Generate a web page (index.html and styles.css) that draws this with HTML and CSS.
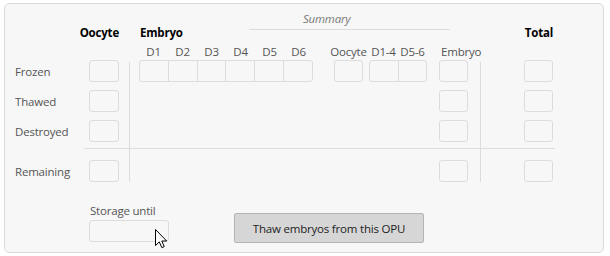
FILE: index.html
```html
<!DOCTYPE html>
<html lang="en">
<head>
    <meta charset="UTF-8">
    <title>OPU Storage</title>
    <link rel="stylesheet" href="styles.css">
</head>
<body>

<div class="panel">
    <div class="grid">
        <!-- header row -->
        <div class="head h-oocyte">Oocyte</div>
        <div class="head h-embryo">Embryo</div>
        <div class="summary">Summary</div>
        <div class="head h-total">Total</div>

        <!-- sub header row -->
        <div class="sub-days">
            <span>D1</span><span>D2</span><span>D3</span><span>D4</span><span>D5</span><span>D6</span>
        </div>
        <div class="sub s-oocyte">Oocyte</div>
        <div class="sub-days s-days"><span>D1-4</span><span>D5-6</span></div>
        <div class="sub s-embryo">Embryo</div>

        <!-- row labels -->
        <div class="label row-frozen">Frozen</div>
        <div class="label row-thawed">Thawed</div>
        <div class="label row-destroyed">Destroyed</div>
        <div class="label row-remaining">Remaining</div>

        <!-- oocyte column -->
        <div class="cell col-oocyte row-frozen"></div>
        <div class="cell col-oocyte row-thawed"></div>
        <div class="cell col-oocyte row-destroyed"></div>
        <div class="cell col-oocyte row-remaining"></div>

        <div class="vline vline-left"></div>

        <!-- embryo days -->
        <div class="cell-group col-days row-frozen">
            <div></div><div></div><div></div><div></div><div></div><div></div>
        </div>

        <!-- summary -->
        <div class="cell col-s-oocyte row-frozen"></div>
        <div class="cell-group col-s-days row-frozen"><div></div><div></div></div>
        <div class="cell col-s-embryo row-frozen"></div>
        <div class="cell col-s-embryo row-thawed"></div>
        <div class="cell col-s-embryo row-destroyed"></div>
        <div class="cell col-s-embryo row-remaining"></div>

        <div class="vline vline-right"></div>

        <!-- totals -->
        <div class="cell col-total row-frozen"></div>
        <div class="cell col-total row-thawed"></div>
        <div class="cell col-total row-destroyed"></div>
        <div class="cell col-total row-remaining"></div>

        <div class="hline"></div>
    </div>

    <div class="storage-row">
        <div class="storage">
            <label for="storageUntil">Storage until</label>
            <input type="text" id="storageUntil">
        </div>
        <button type="button">Thaw embryos from this OPU</button>
    </div>

    <!-- mouse pointer over the date field -->
    <svg class="cursor" width="13" height="20" viewBox="0 0 13 20">
        <path d="M0.5 0.5 L0.5 16.5 L4.3 12.9 L6.8 18.6 L9.2 17.6 L6.8 12 L11.7 12 Z" fill="#fff" stroke="#000" stroke-width="1" stroke-linejoin="miter"/>
    </svg>
</div>

</body>
</html>
```

FILE: styles.css
```css
body {
    margin: 0;
    background-color: #fff;
    font-family: "Open Sans", "Liberation Sans", sans-serif;
    font-size: 11.5px;
    letter-spacing: -0.2px;
    color: #555;
}
.panel {
    position: relative;
    box-sizing: border-box;
    width: 600px;
    height: 250px;
    margin: 3px 0 0 4px;
    padding: 6px 0 0 10px;
    background-color: #f7f7f7;
    border: 1px solid #dcdcdc;
    border-radius: 5px;
}
.grid {
    display: grid;
    grid-template-columns: 69px 5px 30px 10px 1px 9px 174px 21px 29px 6px 58px 12px 29px 12px 1px 43px 29px 2px;
    grid-template-rows: 30px 20px 22px 8px 22px 8px 22px 6px 1px 11px 22px;
}
.head {
    grid-row: 1;
    align-self: end;
    display: flex;
    margin-bottom: -1px;
    line-height: 16px;
    font-weight: bold;
    color: #000;
    white-space: nowrap;
}
.h-oocyte {
    grid-column: 3;
    justify-content: flex-end;
}
.h-embryo {
    grid-column: 7;
    padding-left: 1px;
}
.h-total {
    grid-column: 17;
    justify-content: flex-end;
}
.summary {
    grid-row: 1;
    grid-column: 7 / 14;
    align-self: start;
    margin: 0 18px 0 110px;
    padding: 1px 0 2px 54px;
    line-height: 16px;
    font-style: italic;
    color: #777;
    border-bottom: 1px solid #dcdcdc;
}
.sub, .sub-days {
    grid-row: 2;
    align-self: end;
    display: flex;
    line-height: 16px;
    white-space: nowrap;
}
.sub-days {
    grid-column: 7;
}
.sub-days span {
    width: 29px;
    display: flex;
    justify-content: center;
}
.s-oocyte {
    grid-column: 9;
    justify-content: center;
}
.s-days {
    grid-column: 11;
}
.s-embryo {
    grid-column: 13;
    padding-left: 2px;
}
.label {
    grid-column: 1;
    padding-top: 1px;
    line-height: 22px;
    white-space: nowrap;
}
.row-frozen { grid-row: 3; }
.row-thawed { grid-row: 5; }
.row-destroyed { grid-row: 7; }
.row-remaining { grid-row: 11; }

.cell, .cell-group {
    box-sizing: border-box;
    border: 1px solid #dcdcdc;
    border-radius: 3px;
}
.cell-group {
    display: flex;
}
.cell-group div {
    flex: 1;
}
.cell-group div + div {
    border-left: 1px solid #dcdcdc;
}
.col-oocyte { grid-column: 3; }
.col-days { grid-column: 7; }
.col-s-oocyte { grid-column: 9; }
.col-s-days { grid-column: 11; }
.col-s-embryo { grid-column: 13; }
.col-total { grid-column: 17; }

.vline {
    grid-row: 3 / 12;
    margin-top: 2px;
    background-color: #dcdcdc;
}
.vline-left { grid-column: 5; }
.vline-right { grid-column: 15; }
.hline {
    grid-row: 9;
    grid-column: 2 / 19;
    background-color: #dcdcdc;
}

.storage-row {
    display: flex;
    align-items: flex-end;
    margin-left: 74px;
    margin-top: 21px;
}
.storage label {
    display: block;
    padding-left: 1px;
    line-height: 16px;
    white-space: nowrap;
}
.storage input {
    display: block;
    box-sizing: border-box;
    width: 80px;
    height: 22px;
    margin: 1px 0 0;
    background-color: #f7f7f7;
    border: 1px solid #dcdcdc;
    border-radius: 3px;
}
button {
    box-sizing: border-box;
    width: 190px;
    height: 30px;
    margin: 0 0 -1px 65px;
    padding: 0;
    font-family: inherit;
    font-size: 11.5px;
    letter-spacing: -0.2px;
    color: #222;
    background-color: #d6d6d6;
    border: 1px solid #b4b4b4;
    border-radius: 2px;
}
.cursor {
    position: absolute;
    left: 150px;
    top: 225px;
}
```
